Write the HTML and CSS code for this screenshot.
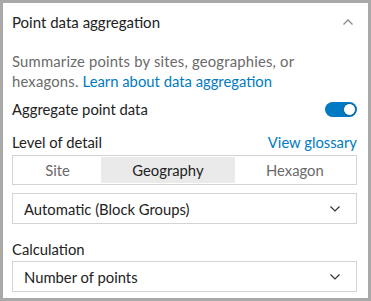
FILE: index.html
```html
<!DOCTYPE html>
<html lang="en">
    <head>
        <meta charset="UTF-8" />
        <meta name="viewport" content="width=device-width, initial-scale=1.0" />
        <title>Point data aggregation</title>
        <link rel="stylesheet" href="styles.css">
    </head>
    <body>
        <div class="panel">
            <div class="header">
                <span class="title">Point data aggregation</span>
                <svg class="chevron-up" width="12" height="8" viewBox="0 0 12 8">
                    <path d="M1.5 6.5 L6 2 L10.5 6.5" fill="none" stroke="#8a8a8a" stroke-width="1.3" />
                </svg>
            </div>
            <div class="content">
                <p class="desc">Summarize points by sites, geographies, or hexagons. <a class="link" href="#">Learn about data aggregation</a></p>
                <div class="row toggle-row">
                    <span class="label">Aggregate point data</span>
                    <span class="switch"><span class="knob"></span></span>
                </div>
                <div class="row level-row">
                    <span class="label">Level of detail</span>
                    <a class="link" href="#">View glossary</a>
                </div>
                <div class="segments">
                    <button class="segment">Site</button>
                    <button class="segment active">Geography</button>
                    <button class="segment">Hexagon</button>
                </div>
                <div class="select first">
                    <span>Automatic (Block Groups)</span>
                    <svg width="12" height="8" viewBox="0 0 12 8">
                        <path d="M1.5 1.5 L6 6 L10.5 1.5" fill="none" stroke="#333" stroke-width="1.2" />
                    </svg>
                </div>
                <div class="label calc">Calculation</div>
                <div class="select">
                    <span>Number of points</span>
                    <svg width="12" height="8" viewBox="0 0 12 8">
                        <path d="M1.5 1.5 L6 6 L10.5 1.5" fill="none" stroke="#333" stroke-width="1.2" />
                    </svg>
                </div>
            </div>
        </div>
    </body>
</html>
```

FILE: styles.css
```css
* {
    padding: 0;
    margin: 0;
    box-sizing: border-box;
}
body {
    font-family: Lato, sans-serif;
    font-size: 14.8px;
    color: #222;
    background-color: #fff;
}
.panel {
    width: 371px;
    height: 301px;
    border: 3px solid #a9a9a9;
    background-color: #fff;
}
.header {
    height: 38px;
    display: flex;
    align-items: center;
    justify-content: space-between;
    padding: 0 14px 0 9px;
}
.title {
    font-size: 15px;
    color: #222;
}
.content {
    padding: 0 11px 0 9px;
}
.desc {
    margin-top: 10px;
    padding-right: 40px;
    line-height: 20px;
    color: #6a6a6a;
    letter-spacing: 0.2px;
}
.link {
    color: #007ac2;
    text-decoration: none;
    letter-spacing: 0;
}
.row {
    display: flex;
    justify-content: space-between;
    align-items: center;
    height: 20px;
}
.label {
    line-height: 20px;
    color: #222;
}
.toggle-row {
    margin-top: 8px;
}
.switch {
    position: relative;
    width: 32px;
    height: 15px;
    border-radius: 8px;
    background-color: #007ac2;
}
.knob {
    position: absolute;
    top: 1px;
    right: 1px;
    width: 13px;
    height: 13px;
    border-radius: 50%;
    background-color: #fff;
    border: 1px solid #005e95;
}
.level-row {
    margin-top: 13px;
}
.segments {
    margin-top: 3px;
    display: flex;
    height: 30px;
    border: 1px solid #d4d4d4;
    padding: 1px;
}
.segment {
    all: unset;
    flex: 1 1 auto;
    display: flex;
    justify-content: center;
    align-items: center;
    font-family: Lato, sans-serif;
    font-size: 14.8px;
    color: #6a6a6a;
}
.segment.active {
    background-color: #eaeaea;
    color: #222;
}
.select {
    display: flex;
    justify-content: space-between;
    align-items: center;
    height: 31px;
    border: 1px solid #d4d4d4;
    padding: 0 15px 0 11px;
    color: #222;
}
.select.first {
    margin-top: 8px;
}
.calc {
    margin-top: 15px;
    margin-bottom: 2px;
}
```
